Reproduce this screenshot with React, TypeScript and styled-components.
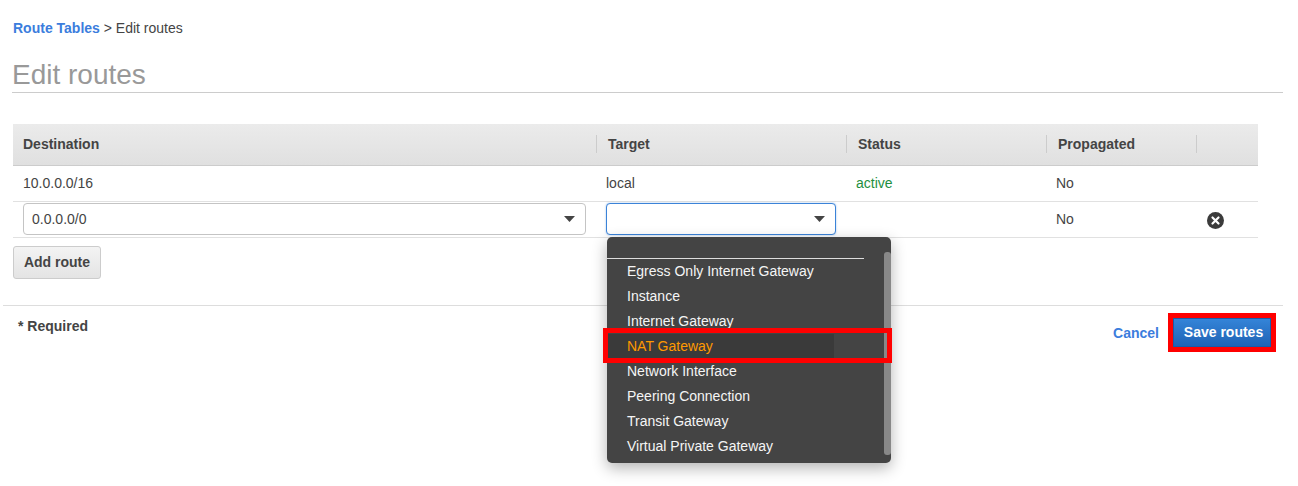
import React from "react";
import styled, { createGlobalStyle } from "styled-components";

const GlobalStyle = createGlobalStyle`
  html, body {
    margin: 0;
    padding: 0;
    background: #fff;
    font-family: "Liberation Sans", Arial, sans-serif;
    font-size: 14px;
    color: #444;
  }
`;

const COLUMNS = "583px 250px 200px 150px 62px";

const targets = [
  "Egress Only Internet Gateway",
  "Instance",
  "Internet Gateway",
  "NAT Gateway",
  "Network Interface",
  "Peering Connection",
  "Transit Gateway",
  "Virtual Private Gateway",
];

const CaretIcon = () => (
  <svg width="11" height="6" viewBox="0 0 11 6">
    <path d="M0 0h11L5.5 6z" fill="#444" />
  </svg>
);

const CloseIcon = () => (
  <svg width="17" height="17" viewBox="0 0 17 17">
    <circle cx="8.5" cy="8.5" r="8.5" fill="#3b3b3b" />
    <path d="M5.5 5.5l6 6M11.5 5.5l-6 6" stroke="#fff" strokeWidth="2.2" strokeLinecap="round" />
  </svg>
);

const App = () => {
  return (
    <>
      <GlobalStyle />
      <Page>
        <Breadcrumb>
          <CrumbLink>Route Tables</CrumbLink> &gt; Edit routes
        </Breadcrumb>
        <Title>Edit routes</Title>

        <RoutesTable>
          <HeaderRow>
            <HeaderCell $first>Destination</HeaderCell>
            <HeaderCell>Target</HeaderCell>
            <HeaderCell>Status</HeaderCell>
            <HeaderCell>Propagated</HeaderCell>
            <HeaderCell />
          </HeaderRow>

          <Row>
            <Cell>10.0.0.0/16</Cell>
            <Cell>local</Cell>
            <Cell $active>active</Cell>
            <Cell>No</Cell>
            <Cell />
          </Row>

          <Row>
            <Cell>
              <Select>
                <span>0.0.0.0/0</span>
                <CaretIcon />
              </Select>
            </Cell>
            <Cell>
              <SelectWrap>
                <Select $focused>
                  <span />
                  <CaretIcon />
                </Select>
                <Menu>
                  <MenuDivider />
                  {targets.map((name) => (
                    <MenuItem key={name} $selected={name === "NAT Gateway"}>
                      {name}
                    </MenuItem>
                  ))}
                  <ScrollThumb />
                </Menu>
              </SelectWrap>
            </Cell>
            <Cell />
            <Cell>No</Cell>
            <IconCell>
              <CloseIcon />
            </IconCell>
          </Row>
        </RoutesTable>

        <AddButton>Add route</AddButton>

        <Footer>
          <Required>* Required</Required>
          <Actions>
            <CancelLink>Cancel</CancelLink>
            <SaveButton>Save routes</SaveButton>
          </Actions>
        </Footer>
      </Page>
    </>
  );
};

const Page = styled.div`
  width: 1298px;
  height: 486px;
  padding-top: 18px;
  box-sizing: border-box;
  overflow: hidden;
`;

const Breadcrumb = styled.div`
  margin-left: 13px;
  line-height: 20px;
  color: #444;
`;

const CrumbLink = styled.span`
  color: #3b7ddd;
  font-weight: 700;
`;

const Title = styled.h1`
  margin: 21px 15px 0 12px;
  padding-bottom: 1px;
  font-size: 28px;
  font-weight: 400;
  line-height: 32px;
  color: #999;
  border-bottom: 1px solid #ccc;
`;

const RoutesTable = styled.div`
  width: 1245px;
  margin: 31px 0 0 13px;
`;

const HeaderRow = styled.div`
  display: grid;
  grid-template-columns: ${COLUMNS};
  height: 42px;
  padding-bottom: 2px;
  box-sizing: border-box;
  align-items: center;
  background: linear-gradient(#ebebeb, #e0e0e0);
  border-bottom: 1px solid #ccc;
`;

const HeaderCell = styled.div<{ $first?: boolean }>`
  height: 18px;
  line-height: 18px;
  font-weight: 700;
  color: #444;
  padding-left: ${(p) => (p.$first ? "10px" : "11px")};
  border-left: ${(p) => (p.$first ? "none" : "1px solid #ccc")};
`;

const Row = styled.div`
  display: grid;
  grid-template-columns: ${COLUMNS};
  height: 36px;
  padding-bottom: 2px;
  box-sizing: border-box;
  align-items: center;
  border-bottom: 1px solid #e1e1e1;
`;

const Cell = styled.div<{ $active?: boolean }>`
  padding: 0 10px;
  color: ${(p) => (p.$active ? "#1d8f3f" : "#444")};
  line-height: 20px;
`;

const IconCell = styled.div`
  display: flex;
  padding-left: 11px;
  padding-top: 4px;
`;

const SelectWrap = styled.div`
  position: relative;
`;

const Select = styled.div<{ $focused?: boolean }>`
  display: flex;
  align-items: center;
  justify-content: space-between;
  height: 32px;
  box-sizing: border-box;
  padding: 0 10px 0 8px;
  background: #fff;
  border: 1px solid ${(p) => (p.$focused ? "#3b83d8" : "#c4c4c4")};
  border-radius: 4px;
  box-shadow: ${(p) => (p.$focused ? "0 0 2px rgba(59, 131, 216, 0.5)" : "none")};
  color: #444;
`;

const Menu = styled.div`
  position: absolute;
  top: 34px;
  left: 1px;
  z-index: 2;
  width: 284px;
  height: 226px;
  padding-top: 21px;
  box-sizing: border-box;
  background: #444;
  border-radius: 5px;
  box-shadow: 0 5px 15px rgba(0, 0, 0, 0.3);
`;

const MenuDivider = styled.div`
  width: 257px;
  height: 1px;
  background: #ddd;
`;

const MenuItem = styled.div<{ $selected?: boolean }>`
  position: relative;
  height: 25px;
  line-height: 25px;
  padding-left: 20px;
  color: ${(p) => (p.$selected ? "#ff9900" : "#f5f5f5")};
  background: ${(p) =>
    p.$selected ? "linear-gradient(to right, #3a3a3a 227px, transparent 227px)" : "none"};

  ${(p) =>
    p.$selected
      ? `
    &::after {
      content: "";
      position: absolute;
      top: -6px;
      right: -1px;
      bottom: -4px;
      left: -4px;
      z-index: 2;
      border: 5px solid #f00;
    }
  `
      : ""}
`;

const ScrollThumb = styled.div`
  position: absolute;
  top: 15px;
  right: 0;
  width: 7px;
  height: 203px;
  background: #888;
  border-radius: 3px;
`;

const AddButton = styled.button`
  display: block;
  width: 88px;
  height: 33px;
  margin: 8px 0 0 13px;
  padding: 0 0 2px;
  background: linear-gradient(#f3f3f3, #e4e4e4);
  border: 1px solid #ccc;
  border-radius: 3px;
  font-family: inherit;
  font-size: 14px;
  font-weight: 700;
  color: #444;
`;

const Footer = styled.div`
  display: flex;
  justify-content: space-between;
  align-items: flex-start;
  margin: 26px 15px 0 3px;
  padding: 10px 12px 0 15px;
  border-top: 1px solid #ddd;
`;

const Required = styled.div`
  font-weight: 700;
  line-height: 20px;
  color: #444;
`;

const Actions = styled.div`
  display: flex;
  align-items: center;
  gap: 14px;
  margin-top: 2px;
`;

const CancelLink = styled.span`
  color: #3b7ddd;
  font-weight: 700;
`;

const SaveButton = styled.button`
  width: 98px;
  height: 29px;
  padding: 0 0 2px 3px;
  background: linear-gradient(#3484d8, #1f63b5);
  border: 1px solid #1b5ba8;
  border-radius: 0;
  outline: 5px solid #f00;
  font-family: inherit;
  font-size: 14px;
  font-weight: 700;
  color: #fff;
`;

export default App;
